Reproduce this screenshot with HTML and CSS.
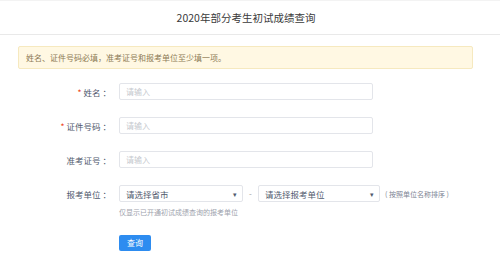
FILE: index.html
```html
<!DOCTYPE html>
<html lang="zh-CN">
<head>
  <meta charset="UTF-8">
  <title>2020年部分考生初试成绩查询</title>
  <link rel="stylesheet" href="styles.css">
</head>
<body>
  <div class="page-header">
    <h1>2020年部分考生初试成绩查询</h1>
  </div>
  <div class="alert">姓名、证件号码必填，准考证号和报考单位至少填一项。</div>
  <form class="query-form">
    <div class="form-row">
      <label class="form-label"><span class="req">*</span>姓名 ：</label>
      <div class="field wide">请输入</div>
    </div>
    <div class="form-row">
      <label class="form-label"><span class="req">*</span>证件号码 ：</label>
      <div class="field wide">请输入</div>
    </div>
    <div class="form-row">
      <label class="form-label">准考证号 ：</label>
      <div class="field wide">请输入</div>
    </div>
    <div class="form-row">
      <label class="form-label">报考单位 ：</label>
      <div class="field select city">请选择省市<span class="caret">▾</span></div>
      <span class="dash">-</span>
      <div class="field select unit">请选择报考单位<span class="caret">▾</span></div>
      <span class="hint">( 按照单位名称排序 )</span>
    </div>
    <p class="note">仅显示已开通初试成绩查询的报考单位</p>
    <div class="actions">
      <button type="button" class="btn-primary">查询</button>
    </div>
  </form>
</body>
</html>
```

FILE: styles.css
```css
    body {
      margin: 0;
      background: #fff;
      font-family: "Noto Sans CJK SC", "Noto Sans", sans-serif;
      color: #515a6e;
    }
    .page-header {
      height: 35px;
      border-top: 1px solid #f3f3f3;
      border-bottom: 1px solid #e9e9e9;
      box-sizing: border-box;
      display: flex;
      align-items: center;
      justify-content: center;
    }
    .page-header h1 {
      margin: 0 0 0 -8px;
      font-size: 10.5px;
      font-weight: normal;
      color: #3a3a3a;
    }
    .alert {
      margin: 11px 27px 0 18px;
      height: 23px;
      box-sizing: border-box;
      padding: 0 7px;
      display: flex;
      align-items: center;
      background: #fff8e3;
      border: 1px solid #f6e9bf;
      border-radius: 2px;
      font-size: 8px;
      color: #8c7a55;
    }

/*---------------------------------- FORM ----------------------------------*/
    .query-form {
      margin-top: 14px;
    }
    .form-row {
      display: flex;
      align-items: center;
      height: 17px;
      margin-bottom: 17px;
    }
    .form-label {
      width: 115px;
      padding-right: 4px;
      box-sizing: border-box;
      text-align: right;
      font-size: 8.5px;
      color: #515a6e;
      white-space: nowrap;
    }
    .req {
      color: #ed4014;
      margin-right: 2px;
    }
    .field {
      height: 17px;
      box-sizing: border-box;
      border: 1px solid #e3e5ea;
      border-radius: 2px;
      padding: 0 6px;
      display: flex;
      align-items: center;
      font-size: 8px;
      color: #c5c8ce;
      position: relative;
    }
    .field.wide {
      width: 254px;
      margin-left: 4px;
    }
    .field.select {
      color: #515a6e;
      font-size: 8.5px;
    }
    .field.city {
      width: 124px;
      margin-left: 4px;
    }
    .field.unit {
      width: 122px;
    }
    .caret {
      position: absolute;
      right: 5px;
      top: 3px;
      font-size: 7px;
      color: #515a6e;
    }
    .dash {
      width: 15px;
      text-align: center;
      font-size: 8px;
      color: #999;
    }
    .hint {
      margin-left: 5px;
      font-size: 7px;
      color: #808695;
    }
    .note {
      margin: -12px 0 0 119px;
      font-size: 7px;
      color: #9ea3ad;
    }
    .actions {
      margin: 10px 0 0 119px;
    }
    .btn-primary {
      width: 32px;
      height: 16px;
      padding: 0;
      border: none;
      border-radius: 2px;
      background: #2d8cf0;
      color: #fff;
      font-family: "Noto Sans CJK SC", sans-serif;
      font-size: 8px;
      cursor: pointer;
    }
```
